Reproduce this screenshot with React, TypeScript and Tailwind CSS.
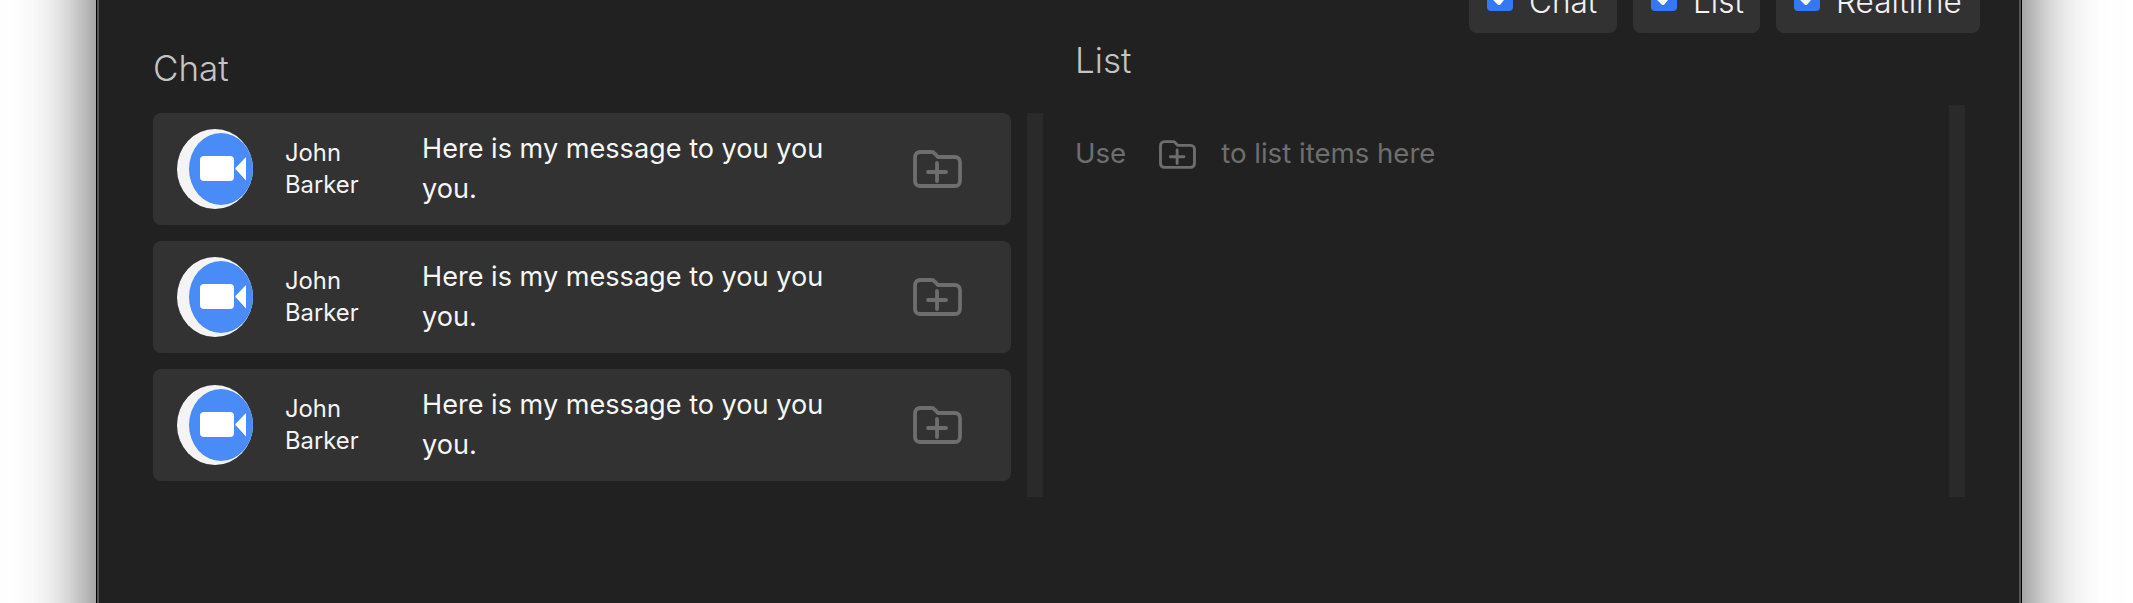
const font = "font-['Inter','Liberation_Sans',sans-serif]"

const messages = [
  { id: 1, name: "John Barker", text: "Here is my message to you you you." },
  { id: 2, name: "John Barker", text: "Here is my message to you you you." },
  { id: 3, name: "John Barker", text: "Here is my message to you you you." },
]

function ZoomAvatar() {
  return (
    <svg viewBox="0 0 76 80" className="w-[76px] h-[80px] shrink-0">
      <ellipse cx="38" cy="40" rx="38" ry="40" fill="#f4f4f4" />
      <ellipse cx="44" cy="40" rx="32" ry="36" fill="#4a8cf7" />
      <rect x="23" y="27" width="34" height="25" rx="4" fill="#ffffff" />
      <path d="M58 39.5 L69 28 V51.5 Z" fill="#ffffff" />
    </svg>
  )
}

function FolderPlusIcon({ className }: { className: string }) {
  return (
    <svg viewBox="0 0 49 38" fill="none" stroke="#6e6e6e" strokeWidth="3.8" strokeLinecap="round" strokeLinejoin="round" className={className}>
      <path d="M7 2h12a3 3 0 0 1 2.2 1L25 7H42a5 5 0 0 1 5 5v19a5 5 0 0 1-5 5H7a5 5 0 0 1-5-5V7a5 5 0 0 1 5-5Z" />
      <path d="M15 22h18M24 13v18" />
    </svg>
  )
}

function ToggleChip({ label, width }: { label: string; width: string }) {
  return (
    <div className={`flex items-end gap-4 h-[70px] pl-[18px] pb-[22px] rounded-b-[8px] bg-[#323232] ${width}`}>
      <span className="flex items-center justify-center w-[26px] h-[26px] rounded-[4px] bg-[#3478f6] shrink-0">
        <svg viewBox="0 0 26 26" className="w-[26px] h-[26px]" fill="none" stroke="#ffffff" strokeWidth="4" strokeLinecap="round" strokeLinejoin="round">
          <path d="M7 13l5 5 8-10" />
        </svg>
      </span>
      <span className="text-[31.5px] leading-[31px] mb-[-6px] font-[350] text-[#f2f2f2]">{label}</span>
    </div>
  )
}

function ChatCard({ name, text }: { name: string; text: string }) {
  return (
    <div className="flex items-center h-[112px] pl-6 rounded-[8px] bg-[#323232]">
      <ZoomAvatar />
      <div className="w-[132px] pl-[32px] shrink-0 text-[23.8px] leading-[32px] font-[370] text-[#f4f4f4]">
        {name.split(" ").map((part) => (
          <div key={part}>{part}</div>
        ))}
      </div>
      <p className="w-[440px] ml-[37px] shrink-0 text-[27.1px] leading-[40px] font-[370] text-[#f6f6f6]">{text}</p>
      <FolderPlusIcon className="w-[49px] h-[38px] shrink-0 ml-[51px]" />
    </div>
  )
}

export default function App() {
  return (
    <div className={`h-screen overflow-hidden bg-white pl-[96px] pr-[111px] ${font}`}>
      {/* window runs past the page so its shadow stays even along the edges */}
      <div className="-mt-[120px] h-[calc(100vh+240px)] border-l border-r border-black shadow-[0_0_70px_rgba(0,0,0,0.7)]">
        <div className="h-full pt-[120px] border-l-2 border-r-2 border-[#555555] bg-[#212121] overflow-hidden">
          {/* Toggle bar, cut off by the top of the picture */}
          <div className="flex justify-end gap-4 h-[33px] pr-[39px] items-end">
            <ToggleChip label="Chat" width="w-[148px]" />
            <ToggleChip label="List" width="w-[127px]" />
            <ToggleChip label="Realtime" width="w-[204px]" />
          </div>

          <div className="grid grid-cols-2 gap-8 px-[54px]">
            {/* Chat column */}
            <div className="flex flex-col">
              <h2 className="mt-[15px] h-[65px] text-[35px] leading-[40px] font-light text-[#c4c4c4]">Chat</h2>
              <div className="flex gap-4 h-[384px]">
                <div className="flex-1 flex flex-col gap-4">
                  {messages.map((m) => (
                    <ChatCard key={m.id} name={m.name} text={m.text} />
                  ))}
                </div>
                <div className="w-4 bg-[#2a2a2a]" />
              </div>
            </div>

            {/* List column */}
            <div className="flex flex-col">
              <h2 className="mt-[7px] h-[65px] text-[35px] leading-[40px] font-light text-[#c4c4c4]">List</h2>
              <div className="flex gap-4 h-[392px]">
                <div className="flex-1 flex items-center h-[98px] text-[27.6px] font-normal text-[#6e6e6e]">
                  <span>Use</span>
                  <FolderPlusIcon className="w-[37px] h-[29px] ml-[33px]" />
                  <span className="ml-[25px]">to list items here</span>
                </div>
                <div className="w-4 bg-[#2a2a2a]" />
              </div>
            </div>
          </div>
        </div>
      </div>
    </div>
  )
}
